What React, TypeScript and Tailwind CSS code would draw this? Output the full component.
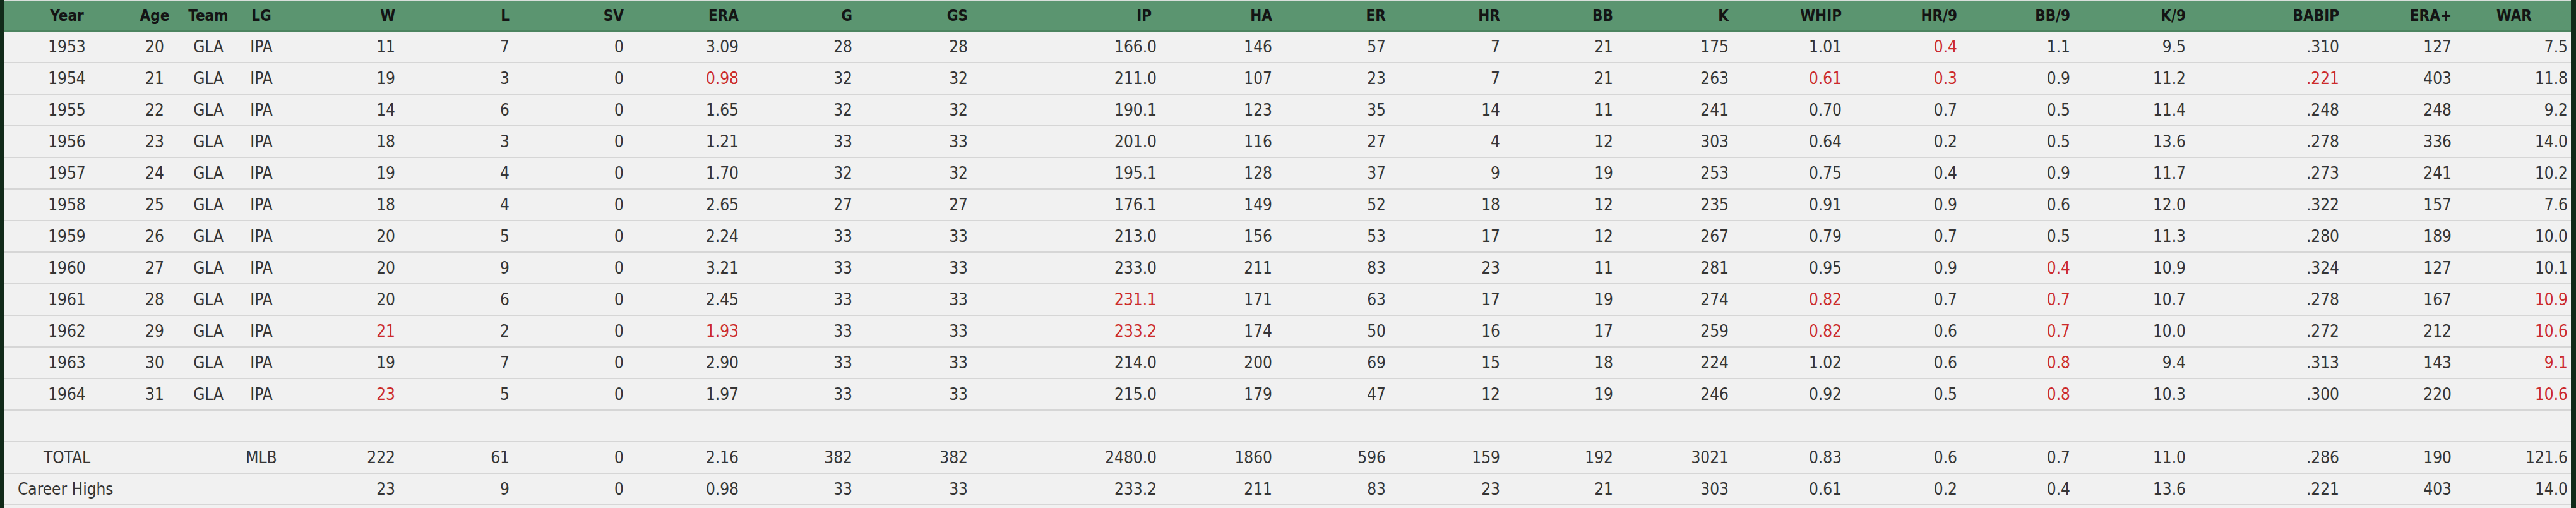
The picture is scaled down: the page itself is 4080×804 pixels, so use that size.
import React from 'react';

// pitching history table
const GRID =
  'grid grid-cols-[200px_78px_92px_76px_179px_181px_181px_182px_180px_183px_299px_183px_180px_181px_179px_183px_179px_183px_179px_183px_243px_178px_184px]';

const HEADERS = ['Year', 'Age', 'Team', 'LG', 'W', 'L', 'SV', 'ERA', 'G', 'GS', 'IP', 'HA', 'ER', 'HR', 'BB', 'K', 'WHIP', 'HR/9', 'BB/9', 'K/9', 'BABIP', 'ERA+', 'WAR'];

// a trailing * marks a highlighted (red) value
const ROWS: string[][] = [
  ['1953', '20', 'GLA', 'IPA', '11', '7', '0', '3.09', '28', '28', '166.0', '146', '57', '7', '21', '175', '1.01', '0.4*', '1.1', '9.5', '.310', '127', '7.5'],
  ['1954', '21', 'GLA', 'IPA', '19', '3', '0', '0.98*', '32', '32', '211.0', '107', '23', '7', '21', '263', '0.61*', '0.3*', '0.9', '11.2', '.221*', '403', '11.8'],
  ['1955', '22', 'GLA', 'IPA', '14', '6', '0', '1.65', '32', '32', '190.1', '123', '35', '14', '11', '241', '0.70', '0.7', '0.5', '11.4', '.248', '248', '9.2'],
  ['1956', '23', 'GLA', 'IPA', '18', '3', '0', '1.21', '33', '33', '201.0', '116', '27', '4', '12', '303', '0.64', '0.2', '0.5', '13.6', '.278', '336', '14.0'],
  ['1957', '24', 'GLA', 'IPA', '19', '4', '0', '1.70', '32', '32', '195.1', '128', '37', '9', '19', '253', '0.75', '0.4', '0.9', '11.7', '.273', '241', '10.2'],
  ['1958', '25', 'GLA', 'IPA', '18', '4', '0', '2.65', '27', '27', '176.1', '149', '52', '18', '12', '235', '0.91', '0.9', '0.6', '12.0', '.322', '157', '7.6'],
  ['1959', '26', 'GLA', 'IPA', '20', '5', '0', '2.24', '33', '33', '213.0', '156', '53', '17', '12', '267', '0.79', '0.7', '0.5', '11.3', '.280', '189', '10.0'],
  ['1960', '27', 'GLA', 'IPA', '20', '9', '0', '3.21', '33', '33', '233.0', '211', '83', '23', '11', '281', '0.95', '0.9', '0.4*', '10.9', '.324', '127', '10.1'],
  ['1961', '28', 'GLA', 'IPA', '20', '6', '0', '2.45', '33', '33', '231.1*', '171', '63', '17', '19', '274', '0.82*', '0.7', '0.7*', '10.7', '.278', '167', '10.9*'],
  ['1962', '29', 'GLA', 'IPA', '21*', '2', '0', '1.93*', '33', '33', '233.2*', '174', '50', '16', '17', '259', '0.82*', '0.6', '0.7*', '10.0', '.272', '212', '10.6*'],
  ['1963', '30', 'GLA', 'IPA', '19', '7', '0', '2.90', '33', '33', '214.0', '200', '69', '15', '18', '224', '1.02', '0.6', '0.8*', '9.4', '.313', '143', '9.1*'],
  ['1964', '31', 'GLA', 'IPA', '23*', '5', '0', '1.97', '33', '33', '215.0', '179', '47', '12', '19', '246', '0.92', '0.5', '0.8*', '10.3', '.300', '220', '10.6*'],
];

const TOTAL = ['TOTAL', '', '', 'MLB', '222', '61', '0', '2.16', '382', '382', '2480.0', '1860', '596', '159', '192', '3021', '0.83', '0.6', '0.7', '11.0', '.286', '190', '121.6'];
const HIGHS = ['Career Highs', '', '', '', '23', '9', '0', '0.98', '33', '33', '233.2', '211', '83', '23', '21', '303', '0.61', '0.2', '0.4', '13.6', '.221', '403', '14.0'];

const headerPad = (i: number) => {
  if (i < 4) return 'justify-center';
  if (i === 10) return 'justify-end pr-[13px]';
  if (i === 22) return 'justify-end pr-[62px]';
  return 'justify-end pr-[5px]';
};

const Row: React.FC<{ cells: string[]; highs?: boolean }> = ({ cells, highs }) => (
  <div className={`${GRID} h-[50px] border-b-2 border-[#d6d6d6] items-center`}>
    {cells.map((c, i) => {
      const red = c.endsWith('*');
      const text = red ? c.slice(0, -1) : c;
      if (highs && i === 0) {
        return (
          <div key={i} className="pl-[22px] whitespace-nowrap">
            {text}
          </div>
        );
      }
      return (
        <div
          key={i}
          className={`flex whitespace-nowrap ${i < 4 ? 'justify-center' : 'justify-end pr-[5px]'} ${red ? 'text-[#cc2b2b]' : ''}`}
        >
          {text}
        </div>
      );
    })}
  </div>
);

export default function App() {
  return (
    <div className="w-[4080px] h-[804px] bg-[#112a19] pl-[6px] pr-[8px] overflow-hidden">
      <div className="h-full bg-[#f1f1f1] border-t-2 border-[#d9dfdb] font-['DejaVu_Sans',sans-serif] [font-stretch:condensed] text-[26px] text-[#353535]">
        <div className={`${GRID} h-[48px] bg-[#5b9570] border-b-2 border-[#4c8460] items-center text-[24px] font-bold text-[#141414]`}>
          {HEADERS.map((h, i) => (
            <div key={h} className={`flex ${headerPad(i)}`}>
              {h}
            </div>
          ))}
        </div>
        {ROWS.map(r => (
          <Row key={r[0]} cells={r} />
        ))}
        <div className="h-[50px] border-b-2 border-[#d6d6d6]" />
        <Row cells={TOTAL} />
        <Row cells={HIGHS} highs />
      </div>
    </div>
  );
}
